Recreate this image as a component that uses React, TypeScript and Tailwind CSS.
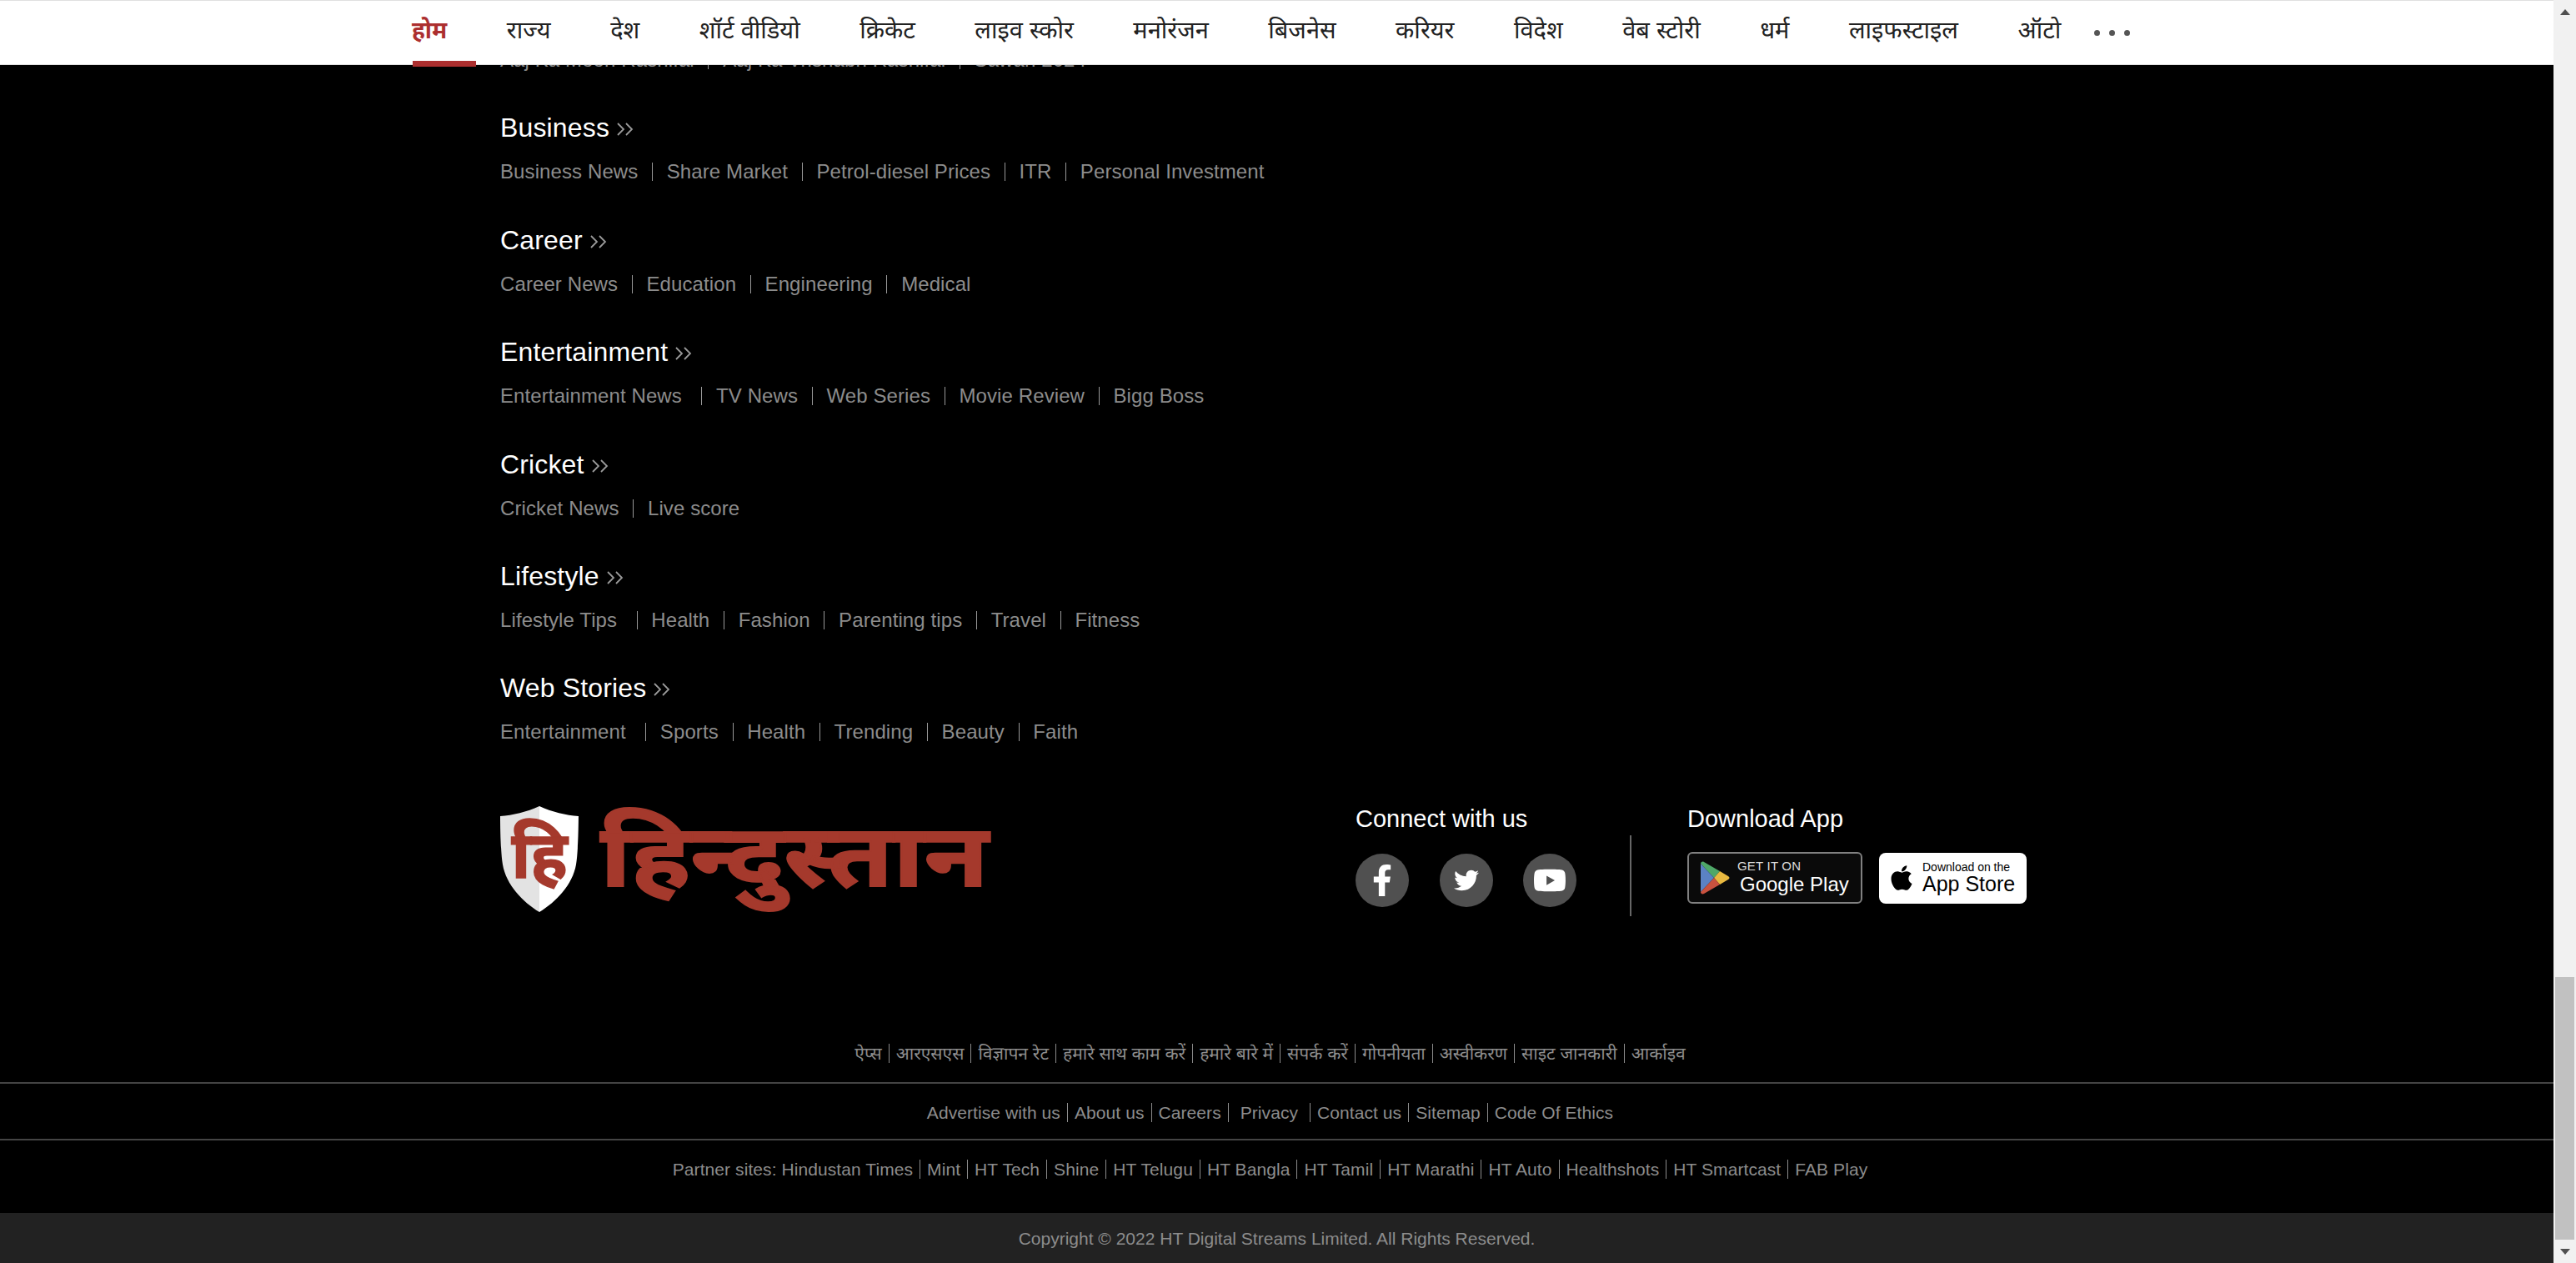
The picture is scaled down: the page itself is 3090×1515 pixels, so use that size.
import type { ReactNode } from "react";
import { FaApple, FaFacebookF, FaTwitter, FaYoutube } from "react-icons/fa";

const F = { fontFamily: '"Liberation Sans", "Noto Sans", sans-serif' };

const navItems = ["होम", "राज्य", "देश", "शॉर्ट वीडियो", "क्रिकेट", "लाइव स्कोर", "मनोरंजन", "बिजनेस", "करियर", "विदेश", "वेब स्टोरी", "धर्म", "लाइफस्टाइल", "ऑटो"];

const sections = [
  { title: "Business", links: ["Business News", "Share Market", "Petrol-diesel Prices", "ITR", "Personal Investment"] },
  { title: "Career", links: ["Career News", "Education", "Engineering", "Medical"] },
  { title: "Entertainment", links: ["Entertainment News\u00a0", "TV News", "Web Series", "Movie Review", "Bigg Boss"] },
  { title: "Cricket", links: ["Cricket News", "Live score"] },
  { title: "Lifestyle", links: ["Lifestyle Tips\u00a0", "Health", "Fashion", "Parenting tips", "Travel", "Fitness"] },
  { title: "Web Stories", links: ["Entertainment\u00a0", "Sports", "Health", "Trending", "Beauty", "Faith"] },
];

function LinkRow({ links }: { links: string[] }) {
  return (
    <div className="flex items-center h-[28px] text-[24px] leading-[28px] tracking-[0.1px] text-[#8c8c8c] whitespace-pre">
      {links.map((l, i) => (
        <span key={l} className={i === links.length - 1 ? "" : "border-r-[1.5px] border-[#999] pr-[16.7px] mr-[16.7px] h-[22px] leading-[22px]"}>
          {l}
        </span>
      ))}
    </div>
  );
}

function FooterRow({ items, className }: { items: string[]; className: string }) {
  return (
    <div className={"flex items-center justify-center pr-[16px] text-[21px] text-[#8c8c8c] whitespace-pre " + className}>
      {items.map((l, i) => (
        <span key={l} className={i === items.length - 1 ? "leading-[23px]" : "border-r border-[#8c8c8c] pr-[8px] mr-[8px] leading-[23px]"}>
          {l}
        </span>
      ))}
    </div>
  );
}

function Chevrons() {
  return (
    <svg width="20" height="16" viewBox="0 0 20 16" fill="none" stroke="#9a9a9a" strokeWidth="1.8" className="ml-[9px] mt-[4px]">
      <path d="M1 1l7 7-7 7M11 1l7 7-7 7" />
    </svg>
  );
}

function Shield() {
  return (
    <svg width="94" height="127" viewBox="0 0 94 127" className="shrink-0">
      <path d="M47 0C32 7 15 11 0 12c0 0 0 40 3 58 4 24 24 45 44 57z" fill="#e3e3e3" />
      <path d="M47 0c15 7 32 11 47 12 0 0 0 40-3 58-4 24-24 45-44 57z" fill="#fff" />
      <text x="47" y="86" textAnchor="middle" fontSize="78" fontWeight="700" fill="#a5392c" stroke="#a5392c" strokeWidth="1.5" fontFamily='"Noto Sans", sans-serif'>हि</text>
    </svg>
  );
}

function Social({ children }: { children: ReactNode }) {
  return <div className="w-[64px] h-[64px] rounded-full bg-[#505050] flex items-center justify-center text-white">{children}</div>;
}

function PlayIcon() {
  return (
    <svg width="36" height="40" viewBox="0 0 36 40" className="shrink-0">
      <path d="M1 3C1 1 3 0 5 1l19 11-7 8z" fill="#4fa868" />
      <path d="M1 3v34l16-17z" fill="#5b82c4" />
      <path d="M24 12l10 6c2 1 2 3 0 4l-10 6-7-8z" fill="#e9b940" />
      <path d="M1 37c0 2 2 3 4 2l19-11-7-8z" fill="#c9523f" />
    </svg>
  );
}

export default function App() {
  return (
    <div className="flex w-[3090px] h-[1515px] overflow-hidden bg-black" style={F}>
      <div className="relative flex-1 flex flex-col min-w-0">
        <header className="absolute top-0 left-0 right-0 z-10 h-[78px] bg-white border-y border-[#e0e0e0] flex items-center pl-[494px] pb-[4px] gap-[71.5px] text-[29px] text-[#222]">
          {navItems.map((n, i) => (
            <span key={n} className={i === 0 ? "text-[28px] text-[#ac2f2f] font-bold whitespace-nowrap" : "whitespace-nowrap"}>
              {n}
            </span>
          ))}
          <span className="flex gap-[11px] -ml-[32px] mt-[4px]">
            <i className="w-[7px] h-[7px] rounded-full bg-[#555]" />
            <i className="w-[7px] h-[7px] rounded-full bg-[#555]" />
            <i className="w-[7px] h-[7px] rounded-full bg-[#555]" />
          </span>
          <span className="absolute left-[495px] top-[72px] w-[76px] h-[7px] bg-[#ac2f2f]" />
        </header>

        <div className="pl-[600px] pt-[58px]">
          <LinkRow links={["Aaj Ka Moon Rashifal", "Aaj Ka Vrishabh Rashifal", "Sawan 2024"]} />
          {sections.map((s) => (
            <section key={s.title} className="mt-[49.4px]">
              <h3 className="flex items-center h-[36px] text-[32px] leading-[36px] tracking-[0.15px] text-white">
                {s.title}
                <Chevrons />
              </h3>
              <div className="mt-[21px]">
                <LinkRow links={s.links} />
              </div>
            </section>
          ))}
        </div>

        <div className="flex pl-[600px] pt-[75px] h-[341.6px]">
          <div className="w-[1026px] flex items-start gap-[26px]">
            <Shield />
            <span className="text-[#a5392c] font-bold text-[104px] leading-[120px] whitespace-nowrap origin-left scale-x-[1.21] [-webkit-text-stroke:2px_#a5392c]">हिन्दुस्तान</span>
          </div>
          <div className="w-[329px]">
            <div className="text-white text-[29px] leading-[30px]">Connect with us</div>
            <div className="flex gap-[36.5px] mt-[27px]">
              <Social><FaFacebookF size={38} /></Social>
              <Social><FaTwitter size={30} /></Social>
              <Social><FaYoutube size={40} /></Social>
            </div>
          </div>
          <div className="w-[2px] h-[97px] bg-[#666] mt-[35px] mr-[67px]" />
          <div>
            <div className="text-white text-[29px] leading-[30px]">Download App</div>
            <div className="flex items-start gap-[20px] mt-[24.6px]">
              <div className="w-[210px] h-[62px] rounded-[6px] border-2 border-[#808080] bg-[#0a0a0a] flex items-center pl-[13px] gap-[9px] text-white">
                <PlayIcon />
                <div className="flex flex-col">
                  <span className="text-[15px] leading-[16px] tracking-[0.2px] text-[#ddd] whitespace-nowrap">GET IT ON</span>
                  <span className="ml-[3px] text-[24px] leading-[28px] font-medium whitespace-nowrap">Google Play</span>
                </div>
              </div>
              <div className="w-[177px] h-[61px] mt-[1px] rounded-[8px] bg-white flex items-center pl-[10px] gap-[8px] text-black">
                <FaApple size={34} className="shrink-0" />
                <div className="flex flex-col">
                  <span className="text-[14px] leading-[15px] whitespace-nowrap">Download on the</span>
                  <span className="text-[25px] leading-[25px] whitespace-nowrap">App Store</span>
                </div>
              </div>
            </div>
          </div>
        </div>

        <FooterRow className="h-[64px] pb-[5px]" items={["ऐप्स", "आरएसएस", "विज्ञापन रेट", "हमारे साथ काम करें", "हमारे बारे में", "संपर्क करें", "गोपनीयता", "अस्वीकरण", "साइट जानकारी", "आर्काइव"]} />
        <FooterRow className="h-[68px] pt-[3px] border-t-[2px] border-[#444] tracking-[0.08px]" items={["Advertise with us", "About us", "Careers", "\u00a0Privacy\u00a0", "Contact us", "Sitemap", "Code Of Ethics"]} />
        <FooterRow className="h-[68px] pt-[3px] border-t-[2px] border-[#444] tracking-[0.08px]" items={["Partner sites: Hindustan Times", "Mint", "HT Tech", "Shine", "HT Telugu", "HT Bangla", "HT Tamil", "HT Marathi", "HT Auto", "Healthshots", "HT Smartcast", "FAB Play"]} />
        <div className="mt-auto h-[60px] pt-[2px] bg-[#222] flex items-center justify-center text-[21px] text-[#8c8c8c]">
          Copyright © 2022 HT Digital Streams Limited. All Rights Reserved.
        </div>
      </div>

      <div className="relative w-[27px] bg-[#f1f1f1] flex flex-col items-center">
        <div className="h-[29px] flex items-center justify-center">
          <div className="w-0 h-0 border-x-[6.5px] border-x-transparent border-b-[7px] border-b-[#505050]" />
        </div>
        <div className="mt-auto w-[23px] h-[315px] bg-[#c1c1c1]" />
        <div className="h-[28px] flex items-center justify-center">
          <div className="w-0 h-0 border-x-[6.5px] border-x-transparent border-t-[7px] border-t-[#505050]" />
        </div>
      </div>
    </div>
  );
}
